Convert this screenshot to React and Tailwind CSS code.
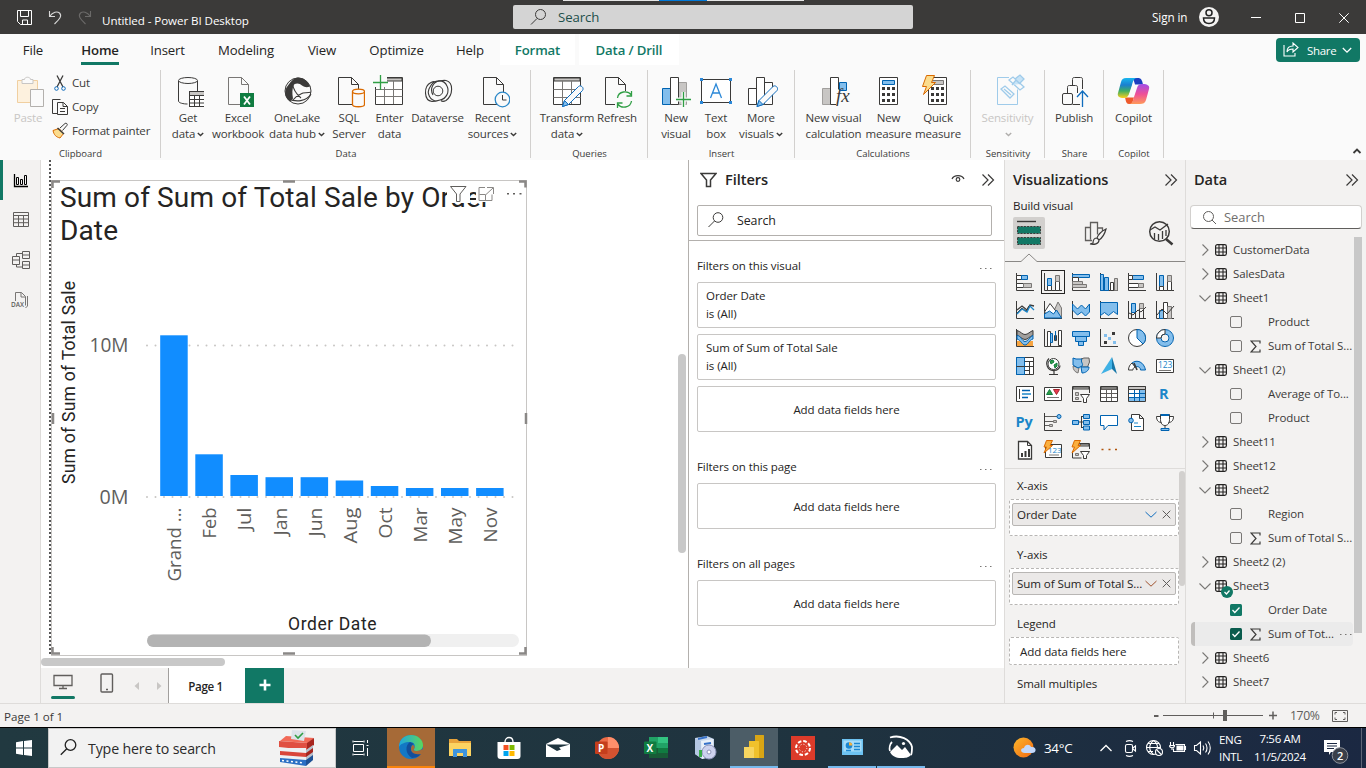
import React from "react";

/* Small drawing helpers */
function Ico({ box, className = "", children }) {
  const [, , w, h] = box.split(" ");
  return (
    <svg viewBox={box} width={w} height={h} fill="none" stroke="#3b3a39" className={"shrink-0 " + className}>
      {children}
    </svg>
  );
}
const B = "#83beec";
const BS = "#0063b1";
const G = "#c8c6c4";

const DoubleChevron = () => (
  <Ico box="0 0 14 14"><path d="M1.500 1.500 7 7l-5.500 5.500M7 1.500 12.500 7 7 12.500" strokeWidth="1.200" /></Ico>
);
const Caret = ({ c = "#3b3a39" }) => (
  <svg width="7" height="5" viewBox="0 0 7 5" fill="none" className="ml-[2px] inline-block"><path d="M.8 1 3.500 3.600 6.200 1" stroke={c} strokeWidth="1.400" /></svg>
);
const Page = ({ x, y, c = "#3b3a39" }) => (
  <path d={`M${x} ${y}h13l7 7v20h-20zM${x + 13} ${y}v7h7`} stroke={c} fill="#fafafa" />
);
const Pencil = ({ x, y }) => (
  <g stroke="#0f6cbd"><path d={`M${x} ${y}l2-6 14-14c2-2 6 1 4 4l-14 14z`} fill="#fafafa" /><path d={`M${x} ${y}l2-6 4 4z`} fill={B} /></g>
);

/* Ribbon */
function Cmd({ w, icon, a, b, caret, dim }) {
  return (
    <div className={"flex shrink-0 flex-col items-center " + w}>
      <div className="flex h-[38px] items-center justify-center">{icon}</div>
      <div className={"flex flex-col items-center whitespace-nowrap text-[11.500px] leading-4 tracking-[-0.16px] " + (dim ? "text-[#c8c6c4]" : "text-[#3b3a39]")}>
        <span>{a}</span>
        <span className="flex items-center">{b}{caret && <Caret c={dim ? "#b0aeac" : "#3b3a39"} />}</span>
      </div>
    </div>
  );
}
function Group({ w, name, children, pad = "" }) {
  return (
    <div className={"flex h-[90px] shrink-0 flex-col " + w}>
      <div className="flex grow">
        <div className={"flex h-[76px] grow pt-[2px] " + pad}>{children}</div>
        <div className="h-[88px] w-px bg-[#d2d0ce]" />
      </div>
      <div className="-mt-[13px] h-[13px] text-center text-[9.500px] leading-[13px] text-[#3b3a39]">{name}</div>
    </div>
  );
}

const DbIcon = (
  <Ico box="172 73 32 36">
    <path d="M178.500 81v20c0 2 5 3 9 3M197.500 81v10" /><ellipse cx="188" cy="80.500" rx="9.500" ry="3" />
    <rect x="189.500" y="91.500" width="15" height="15" fill="#fff" /><path d="M190 92h14v3h-14z" fill={G} stroke="none" /><path d="M189.500 95.500h15M189.500 99.500h15M189.500 103h15M194.500 95v11M199.500 95v11" />
  </Ico>
);
const XlIcon = (
  <Ico box="222 73 32 36"><Page x={228.5} y={77.5} c="#797775" /><path d="M240 93h14v14h-14z" fill="#107c41" stroke="none" />
    <path d="M244 96.500l6 8M250 96.500l-6 8" stroke="#fff" strokeWidth="1.800" /></Ico>
);
const LakeIcon = (
  <Ico box="281 73 32 36"><circle cx="298" cy="91" r="13" /><path d="M298 77.500c6 0 10 4 12 9-3 1-5 1-8-1-2-2-5-3-8-1-2 4-2 9-1 14l-3 3c-6-4-6-12-2-16 3-4 6-8 10-8z" fill="#3b3a39" stroke="none" />
    <path d="M292 82c1 7 4 12 9 16M293 100c4-5 8-6 10-7 5-1 8 0 7-1M288 99c8 3 18 3 23-5" strokeWidth="1.200" /></Ico>
);
const SqlIcon = (
  <Ico box="333 73 32 36"><Page x={338.5} y={77.5} /><path d="M352.500 91.500v13c0 3 12 3 12 0v-13" fill="#fafafa" stroke="#da6a00" strokeWidth="1.300" /><ellipse cx="358.500" cy="91.500" rx="6" ry="2.300" fill="#fafafa" stroke="#da6a00" strokeWidth="1.300" /></Ico>
);
const EnterIcon = (
  <Ico box="373 73 34 36"><path d="M375.500 77.500h27v27h-27z" fill="#fff" /><path d="M384 78h18v3h-18z" fill={G} /><path d="M375.500 89.500h27M375.500 96.500h27M384.500 81v23M393.500 81v23" stroke="#797775" /><path d="M373 75h14v12h-14z" fill="#fafafa" stroke="none" /><path d="M380.500 75v15M373 82.500h15" stroke="#2f9e44" strokeWidth="1.300" /></Ico>
);
const DvIcon = (
  <Ico box="421 73 34 36"><circle cx="438" cy="91" r="4.800" /><path d="M437 101c-7 0-11-8-7-14 4-8 14-8 17-1 3 6-1 13-7 14-3 1-5 1.500-8 1.500-8-1-9-15-1-19 2-1 4-1 5 0" strokeWidth="1.100" /><path d="M433 95c-4-7 1-13 6-14 3-.5 5-1 7-.5 8 2 7 15 0 20-2 1-4 1-5 0" strokeWidth="1.100" /></Ico>
);
const RecentIcon = (
  <Ico box="476 73 34 36"><Page x={483.5} y={77.5} /><circle cx="502.500" cy="99.500" r="7.300" fill="#fafafa" stroke="#2b88c8" strokeWidth="1.300" /><path d="M502.500 95v5h4" /></Ico>
);
const TransIcon = (
  <Ico box="550 73 34 36"><path d="M553.500 77.500h27v27h-27z" fill="#fff" /><path d="M554 78h26v3h-26z" fill={G} /><path d="M553.500 89.500h27M553.500 97.500h27M562.500 81v23M571.500 81v23" stroke="#797775" /><Pencil x={562.5} y={106.500} /></Ico>
);
const RefreshIcon = (
  <Ico box="601 73 34 36"><Page x={606.5} y={77.5} /><path d="M616 91h18v17h-18z" fill="#fafafa" stroke="none" /><path d="M618.500 98c1-7 10-8 14-3M632.500 91v5h-5M632.500 101c-1 7-10 8-14 3M618.500 108v-5h5" stroke="#2f9e44" strokeWidth="1.300" /></Ico>
);
const NewVisIcon = (
  <Ico box="660 73 34 36"><path d="M663.500 88.500h8v16h-8z" fill={B} stroke={BS} /><path d="M679.500 82.500h8v22h-8z" fill={G} stroke="#a19f9d" /><path d="M671.500 77.500h8v27h-8z" fill="#fff" /><path d="M684.500 92v15M677 99.500h15" stroke="#fafafa" strokeWidth="4" /><path d="M684.500 92v15M677 99.500h15" stroke="#2f9e44" strokeWidth="1.300" /></Ico>
);
const TextBoxIcon = (
  <Ico box="699 73 34 36"><path d="M701.500 79.500h29v23h-29z" fill="#fff" /><path d="M710.500 98l5.500-14 5.500 14M712.500 93h7" stroke="#2b88d8" strokeWidth="1.300" /><path d="M700 78h3v3h-3zM729 78h3v3h-3zM700 101h3v3h-3zM729 101h3v3h-3z" fill="#2b88d8" stroke="none" /></Ico>
);
const MoreVisIcon = (
  <Ico box="744 73 34 36"><path d="M748.500 88.500h8v16h-8zM764.500 82.500h8v22h-8z" fill="#fff" /><path d="M756.500 77.500h8v27h-8z" fill="#fff" /><Pencil x={757} y={106.5} /></Ico>
);
const CalcVisIcon = (
  <Ico box="816 73 34 36"><path d="M821.500 88.500h8v16h-8z" fill={G} stroke="#a19f9d" /><path d="M838.500 82.500h7v8h-7z" fill={B} stroke={BS} /><path d="M835 104.500h-5.500v-27h8v12" fill="#fff" /><text x="835" y="102" fontSize="19" fontStyle="italic" className="font-['Liberation_Serif',serif]" fill="#3b3a39" stroke="none">fx</text></Ico>
);
const Calculator = ({ x }) => (
  <g><path d={`M${x} 77.500h18v27h-18z`} fill="#fff" />
    <path d={`M${x + 2.500} 87h3v3h-3zM${x + 7.500} 87h3v3h-3zM${x + 12.500} 87h3v3h-3zM${x + 2.500} 93h3v3h-3zM${x + 7.500} 93h3v3h-3zM${x + 12.500} 93h3v3h-3zM${x + 2.500} 99h3v3h-3zM${x + 7.500} 99h3v3h-3zM${x + 12.500} 99h3v3h-3z`} fill="#3b3a39" stroke="none" /></g>
);
const CalcIcon = (
  <Ico box="872 73 34 36"><Calculator x={879.5} /><path d="M882.500 80.500h12v4h-12z" fill={B} stroke={BS} /></Ico>
);
const QuickIcon = (
  <Ico box="921 73 34 36"><Calculator x={928.5} /><path d="M931.500 80.500h12v4h-12z" fill={G} stroke="#797775" /><path d="M926.500 75.500h8l-3 7h4l-12 12 3-8h-4z" fill="#fbdc8e" stroke="#da6a00" /></Ico>
);
const SensIcon = (
  <Ico box="991 73 34 36"><path d="M1009 77.500h-11.500v27h20v-15" stroke="#9fcbea" /><g stroke="#9fcbea" fill="#fafafa" strokeWidth="1.300"><path d="M1001 89l4-3 9 8-4 4zM1004 89l7 6" /><path d="M1009 80l4-3 11 10-4 3z" /><path d="M1015 79l5-4 4 4-4 4M1012 85l4-5 4 4" fill="#c7e3f6" /></g></Ico>
);
const PubIcon = (
  <Ico box="1058 73 34 36"><path d="M1073.500 85v-5.500c0-1.500.5-2 2-2h6c1.500 0 2 .5 2 2v9.500M1068.500 93v-5.500c0-1.500.5-2 2-2h6c1.500 0 2 .5 2 2v5.500" /><rect x="1063.500" y="93.500" width="10" height="11" rx="1.500" /><path d="M1073.500 104.500h7.500" /><path d="M1083.500 107v-15M1078 97l5.500-6 5.500 6" stroke="#0f6cbd" strokeWidth="1.300" /></Ico>
);
const CopilotIcon = (
  <Ico box="1116 73 36 36">
    <defs>
      <linearGradient id="cpa" x1="0" y1="0" x2="0" y2="1"><stop offset="0" stopColor="#18b6ee" /><stop offset=".35" stopColor="#1a7fd0" /><stop offset=".65" stopColor="#3fae62" /><stop offset="1" stopColor="#fdd01c" /></linearGradient>
      <linearGradient id="cpb" x1="0" y1="0" x2="0" y2="1"><stop offset="0" stopColor="#a14ee8" /><stop offset=".5" stopColor="#ee4f97" /><stop offset="1" stopColor="#ff9a5a" /></linearGradient>
    </defs>
    <g stroke="none"><path d="M1133 78h5c3 0 4 2 5 6.500h-8z" fill="#1c3fc0" /><path d="M1125 97.500h9l-2 6.500h-3c-3 0-3-3-4-6.500z" fill="#ee5a2c" />
      <path d="M1126 78h11c-3 0-4 3-5 7l-3 9c-1 3-2 4-5 4-5 0-7-2-6-5l3-11c1-3 2-4 5-4z" fill="url(#cpa)" />
      <path d="M1140 104h-11c3 0 4-3 5-7l3-9c1-3 2-4 5-4 6 0 8 2 7 5l-3 11c-1 3-3 4-6 4z" fill="url(#cpb)" />
      <path d="M1134 85h4c-2 1-3 4-4 7-1 4-2 5-4 5h-3c2-1 3-4 4-7 1-3 1-5 3-5z" fill="#fafafa" /></g>
  </Ico>
);

function ClipRow({ icon, text }) {
  return <div className="flex h-6 items-center"><div className="flex w-[20px] justify-start">{icon}</div><span className="text-[11.600px] leading-4 tracking-[-0.2px] text-[#3b3a39]">{text}</span></div>;
}

function Ribbon() {
  return (
    <div className="flex h-[90px] bg-[#fafafa]">
      <Group w="w-[161px]" name="Clipboard" pad="pl-[8px]">
        <Cmd w="w-10" dim a="Paste" icon={
          <Ico box="13 73 34 36" className="translate-x-[2px]"><path d="M17.500 80.500h20v22h-20z" fill="#fdf1de" stroke="#f0cfa0" /><path d="M22 83.500v-4h2.500c0-3 6-3 6 0h2.500v4z" fill="#fafafa" stroke="#c8c6c4" /><path d="M30.500 89.500h13v17h-13z" fill="#fafafa" stroke="#b3b0ad" /></Ico>} />
        <div className="-mt-px ml-[4px] flex flex-col">
          <ClipRow text="Cut" icon={<Ico box="52 73 17 20"><path d="M57 75.500l6 11.500M63 75.500l-6 11.500" strokeWidth="1.300" /><circle cx="56.500" cy="88.500" r="1.800" stroke="#0f6cbd" /><circle cx="63.500" cy="88.500" r="1.800" stroke="#0f6cbd" /></Ico>} />
          <ClipRow text="Copy" icon={<Ico box="52 97 17 18"><path d="M57 112.500h-4.500v-14h8" /><path d="M57.500 101.500h6l4 4v8h-10zM63 101.500v4h4.500M60 107.500h5M60 110.500h5" /></Ico>} />
          <ClipRow text="Format painter" icon={<Ico box="52 121 17 18"><path d="M60 127l5-4.500c1-1 3 .5 2 1.800l-4.500 5.200" /><path d="M53 129.500l6-2 4.500 5-3.500 4.500c-4-1-6-3-7-7.500z" fill="#fbdc8e" stroke="#da6a00" /><path d="M57.500 127l6.500 6" stroke="#3b3a39" strokeWidth="1.500" /></Ico>} />
        </div>
      </Group>
      <Group w="w-[370px]" name="Data" pad="pl-[4px]">
        <Cmd w="w-[46px]" icon={DbIcon} a="Get" b="data" caret />
        <Cmd w="w-[54px]" icon={XlIcon} a="Excel" b="workbook" />
        <Cmd w="w-[64px]" icon={LakeIcon} a="OneLake" b="data hub" caret />
        <Cmd w="w-[40px]" icon={SqlIcon} a="SQL" b="Server" />
        <Cmd w="w-[41px]" icon={EnterIcon} a="Enter" b="data" />
        <Cmd w="w-[55px]" icon={DvIcon} a="Dataverse" />
        <Cmd w="w-[55px]" icon={RecentIcon} a="Recent" b="sources" caret />
      </Group>
      <Group w="w-[117px]" name="Queries" pad="pl-[9px]">
        <Cmd w="w-[54px]" icon={TransIcon} a="Transform" b="data" caret />
        <Cmd w="w-[46px]" icon={RefreshIcon} a="Refresh" />
      </Group>
      <Group w="w-[147px]" name="Insert" pad="pl-[7px]">
        <Cmd w="w-[42px]" icon={NewVisIcon} a="New" b="visual" />
        <Cmd w="w-[38px]" icon={TextBoxIcon} a="Text" b="box" />
        <Cmd w="w-[52px]" icon={MoreVisIcon} a="More" b="visuals" caret />
      </Group>
      <Group w="w-[176px]" name="Calculations" pad="pl-[6px]">
        <Cmd w="w-[65px]" icon={CalcVisIcon} a="New visual" b="calculation" />
        <Cmd w="w-[45px]" icon={CalcIcon} a="New" b="measure" />
        <Cmd w="w-[54px]" icon={QuickIcon} a="Quick" b="measure" />
      </Group>
      <Group w="w-[74px]" name="Sensitivity"><Cmd w="w-[73px]" icon={SensIcon} a="Sensitivity" b={<span className="h-4" />} caret dim /></Group>
      <Group w="w-[59px]" name="Share"><Cmd w="w-[58px]" icon={PubIcon} a="Publish" /></Group>
      <Group w="w-[60px]" name="Copilot"><Cmd w="w-[59px]" icon={CopilotIcon} a="Copilot" /></Group>
      <div className="flex grow items-end justify-end pb-[5px] pr-[4px]"><Ico box="0 0 10 8"><path d="M1.500 6 5 2.500 8.500 6" strokeWidth="1.800" /></Ico></div>
    </div>
  );
}

function TitleBar() {
  return (
    <div className="flex h-[34px] items-center bg-[#3b3a39] text-white">
      <div className="flex w-[513px] items-center">
        <Ico box="0 0 16 16" className="ml-[17px] mt-[2px]"><g stroke="#fff"><path d="M.5.5h14v14h-11l-3-3z" /><path d="M3.500.5v6h8v-6M5.500 14v-4h5v4" /></g></Ico>
        <Ico box="0 0 16 16" className="ml-[14px] mt-[2px]"><path d="M2.500 1v5.500h5.500M2.500 6.500C6 2 10 1 12.500 3c3 3 0 6-5 11" stroke="#d8d8d8" strokeWidth="1.100" /></Ico>
        <Ico box="0 0 16 16" className="ml-[14px] mt-[2px]"><path d="M13.500 1v5.500H8M13.500 6.500C10 2 6 1 3.500 3c-3 3 0 6 5 11" stroke="#6b6a69" strokeWidth="1.100" /></Ico>
        <span className="ml-[9px] mt-[7px] whitespace-nowrap text-[11.600px] leading-4 tracking-[-0.07px]">Untitled - Power BI Desktop</span>
      </div>
      <div className="flex h-[34px] w-[400px] flex-col">
        <div className="flex h-[5px] items-start pl-[50px]"><div className="h-px w-24 bg-[#e6e6e6]" /><div className="h-px w-12 bg-[#0078d7]" /><div className="h-px w-[97px] bg-[#e6e6e6]" /></div>
        <div className="flex h-6 items-center rounded-xs bg-[#d4d4d4]">
          <Ico box="0 0 18 18" className="ml-[17px]"><circle cx="10.500" cy="6.500" r="5" /><path d="M7 10.500l-6 6" /></Ico>
          <span className="ml-[10px] mt-px text-[13.200px] tracking-[-0.1px] text-[#1d4f4a]">Search</span>
        </div>
      </div>
      <span className="ml-[239px] mt-px w-[37px] text-[11.700px] tracking-[-0.1px]">Sign in</span>
      <svg width="20" height="20" viewBox="0 0 20 20" fill="none" className="ml-[10px]"><circle cx="10" cy="10" r="10" fill="#f3f2f1" /><circle cx="10" cy="5.800" r="3" stroke="#222" strokeWidth="1.500" /><path d="M4.500 11h11c0 4-2.500 5.500-5.500 5.500S4.500 15 4.500 11z" stroke="#222" strokeWidth="1.500" /></svg>
      <Ico box="0 0 10 10" className="ml-[32px] mt-[2px]"><path d="M0 4.500h10" stroke="#fff" /></Ico>
      <Ico box="0 0 10 10" className="ml-[34px] mt-[2px]"><path d="M.5.5h9v9h-9z" stroke="#fff" /></Ico>
      <Ico box="0 0 10 10" className="ml-[34px] mt-[2px]"><path d="M.3.3l9.400 9.400M9.700.3.300 9.700" stroke="#fff" /></Ico>
    </div>
  );
}

function Tabs() {
  const t = "shrink-0 whitespace-nowrap text-center text-[13.200px] leading-[32px] tracking-[-0.15px] text-[#252423] ";
  return (
    <div className="flex h-9 items-start bg-[#fafafa]">
      <div className={t + "ml-[8px] w-[50px]"}>File</div>
      <div className={t + "ml-[23px] w-[38px]"}><div className="flex justify-center font-semibold">Home</div><div className="-mt-[4px] h-[3px] bg-[#117865]" /></div>
      <div className={t + "ml-[24px] w-[49px]"}>Insert</div>
      <div className={t + "ml-[16px] w-[76px]"}>Modeling</div>
      <div className={t + "ml-[16px] w-[44px]"}>View</div>
      <div className={t + "ml-[20px] w-[65px]"}>Optimize</div>
      <div className={t + "ml-[21px] w-[40px]"}>Help</div>
      <div className={t + "ml-[10px] h-[31px] w-[75px] bg-white font-semibold !text-[#117865]"}>Format</div>
      <div className={t + "ml-[4px] h-[31px] w-[100px] bg-white font-semibold !text-[#117865]"}>Data / Drill</div>
      <div className="grow" />
      <div className="mr-[6px] mt-[4px] flex h-6 w-[84px] items-center rounded bg-[#117865] text-white">
        <svg width="17" height="15" viewBox="0 0 17 15" fill="none" stroke="#fff" strokeWidth="1.100" className="ml-[7px] mb-[2px]"><path d="M1 3v11h11v-3" /><path d="M4 10c0-4 2-6 6-6V1l5 4.500L10 10V7C7 7 5 8 4 10z" /></svg>
        <span className="ml-[7px] mt-px w-[31px] text-[11.500px] font-medium tracking-[-0.3px]">Share</span>
        <svg width="10" height="7" viewBox="0 0 10 7" fill="none" stroke="#fff" strokeWidth="1.300" className="ml-[4px]"><path d="M.8 1 5 5.200 9.200 1" /></svg>
      </div>
    </div>
  );
}

/* Left rail */
function Rail() {
  return (
    <div className="flex w-[41px] shrink-0 flex-col border-r border-[#dedcda] bg-[#f3f2f1]">
      <div className="flex h-10 items-center border-l-[3px] border-[#117865] pl-[10px]"><Ico box="0 0 15 15"><g stroke="#000"><path d="M1.500 1v12.500H15" strokeWidth="1.300" /><path d="M3.500 4.500h2v7h-2zM7.500 6.500h2v5h-2zM11.500 2.500h2v9h-2z" /></g></Ico></div>
      <div className="flex h-10 items-center pb-[2px] pl-[13px]"><Ico box="0 0 16 16"><path d="M.5 1.500h15v14H.5zM.5 4.500h15M.5 8h15M.5 11.700h15M5.500 4v11M10.500 4v11" stroke="#605e5c" /></Ico></div>
      <div className="flex h-10 items-center pl-[12px]"><Ico box="0 0 18 18"><path d="M.5 5.500h7v8h-7zM.5 9h7M10.500.5h7v7h-7zM10.500 4h7M10.500 10.500h7v7h-7zM10.500 14h7M4.500 5V2.500h6M4.500 14v2h6" stroke="#605e5c" /></Ico></div>
      <div className="flex h-10 items-center pl-[11px]"><Ico box="0 0 20 18"><path d="M4.500 10V1.500h6l4 4v9M10 1.500v4.500h4.500M16.500 5v10l-2 2" stroke="#797775" /><text x="0" y="16" fontSize="6.500" fontWeight="600" textLength="13" lengthAdjust="spacingAndGlyphs" fill="#605e5c" stroke="none">DAX</text></Ico></div>
    </div>
  );
}

/* Chart */
const bars = [["Grand ...", 160.7, 74], ["Feb", 41.700, 31], ["Jul", 21, 23], ["Jan", 18.800, 28], ["Jun", 18.800, 29], ["Aug", 15.500, 36], ["Oct", 10, 31], ["Mar", 8, 35], ["May", 8, 37], ["Nov", 8, 35]];
function Plot() {
  return (
    <svg viewBox="52 250 474 404" width="474" height="404" className="font-['Open_Sans','Noto_Sans',sans-serif]">
      <g stroke="#c8c6c4" strokeWidth="2" strokeLinecap="round" strokeDasharray="0 8.500"><path d="M147 345.500h366M147 497h366" /></g>
      {bars.map(([n, h, len], i) => (
        <g key={n}>
          <rect x={160.2 + i * 35.1} y={496 - h} width="27.500" height={h} fill="#118dff" />
          <text transform={`translate(${181.200 + i * 35.1} 507.500) rotate(-90)`} textAnchor="end" textLength={len} lengthAdjust="spacingAndGlyphs" fontSize="19" fill="#605e5c">{n}</text>
        </g>
      ))}
      <text x="89.500" y="352" fontSize="19.500" textLength="39" lengthAdjust="spacingAndGlyphs" fill="#605e5c">10M</text>
      <text x="99.500" y="504" fontSize="19.500" textLength="29" lengthAdjust="spacingAndGlyphs" fill="#605e5c">0M</text>
      <g className="font-['Roboto',sans-serif]" fill="#252423" fontSize="17.500">
        <text transform="translate(75 484) rotate(-90)" textLength="203">Sum of Sum of Total Sale</text>
        <text x="288" y="630" textLength="88.500">Order Date</text>
      </g>
      <rect x="147" y="634" width="372" height="13" rx="6.500" fill="#f0f0f0" />
      <rect x="147" y="634.500" width="284" height="12.500" rx="6.250" fill="#b3b3b3" />
    </svg>
  );
}
function Canvas() {
  return (
    <div className="flex h-[508px] w-[647px] shrink-0 bg-white">
      <div className="flex w-[637px] flex-col">
        <div className="flex h-[496px]">
          <div className="ml-[8px] h-[496px] w-[2px] bg-[repeating-linear-gradient(#555_0_2px,#fff_2px_4px)]" />
          <div className="relative mt-[20px] flex h-[476px] w-[476px] flex-col border border-[#c8c6c4]">
            <div className="h-[69px] whitespace-pre pl-[8px] font-['Roboto',sans-serif] text-[28px] leading-[33px] tracking-[0.13px] text-[#252423]">{"Sum of Sum of Total Sale by Order\nDate"}</div>
            <Plot />
            <svg viewBox="51 180 477 476" width="477" height="476" fill="none" className="absolute -left-px -top-px">
              <path d="M447 183h23v20h-23zM476 183h21v19h-21z" fill="#fff" />
              <path d="M450.500 186.500h15.500l-6 7.500v7.500h-3.500v-7.500z" stroke="#605e5c" />
              <path d="M485 187.500h-6v13h13v-6M479.500 194.500h6v6M487 187.500h6.500v6.500M493 188l-7 6.500" stroke="#8a8886" />
              <path d="M507 193h2v1.500h-2zM513 193h2v1.500h-2zM519.500 193h2v1.500h-2z" fill="#605e5c" />
              <path d="M52.500 188v-6.500H60M519 181.500h6.500v6M52.500 647v6.500H60M519 653.500h6.500V647" stroke="#8a8886" strokeWidth="2.500" />
              <path d="M283 181.500h12M283 653.500h12M53 413v11M526 413v11" stroke="#8a8886" strokeWidth="2.500" />
            </svg>
          </div>
        </div>
        <div className="mt-[2px] h-2 w-[184px] rounded-full bg-[#c8c8c8]" />
      </div>
      <div className="mt-[194px] h-[199px] w-2 rounded-full bg-[#c8c8c8]" />
    </div>
  );
}
function PageTabs() {
  return (
    <div className="flex h-[35px] bg-[#f3f2f1]">
      <div className="ml-[10px] flex w-6 flex-col items-center pt-[6px]"><Ico box="0 0 20 16" className="-ml-px"><path d="M1 1.500h18v10H1zM10 12v2.500M6 14.500h8" strokeWidth="1.300" stroke="#605e5c" /></Ico><div className="mt-[6px] h-[3px] w-6 rounded-sm bg-[#117865]" /></div>
      <Ico box="0 0 14 20" className="ml-[25px] mt-[5px]"><rect x="1" y="1" width="11.500" height="18" rx="1" strokeWidth="1.400" stroke="#605e5c" /><path d="M6 16.500h2" stroke="#605e5c" strokeWidth="1.400" /></Ico>
      <svg width="30" height="10" viewBox="0 0 30 10" className="ml-[20px] mt-[13px]"><path d="M5 1v8L.5 5zM23 1v8L27.500 5z" fill="#c8c6c4" /></svg>
      <div className="ml-[4px] flex w-[77px] flex-col border-l border-[#a19f9d] bg-white"><div className="grow pr-[3px] pt-[2px] text-center text-[11.600px] font-semibold leading-[34px] tracking-[-0.35px] text-[#252423]">Page 1</div><div className="h-1 shrink-0 bg-[#117865]" /></div>
      <div className="flex w-[39px] items-center justify-center bg-[#117865]"><svg width="12" height="12" viewBox="0 0 12 12" className="mb-[2px]"><path d="M6 .5v11M.5 6h11" stroke="#fff" strokeWidth="2.600" /></svg></div>
    </div>
  );
}

/* Filters pane */
const Dots = () => <Ico box="0 0 12 3"><path d="M0 1.500h1.500M5 1.500h1.500M10 1.500h1.500" stroke="#797775" strokeWidth="1" /></Ico>;
function FCard({ a, b }) {
  return (
    <div className="mb-[6px] flex h-[46px] w-[299px] flex-col justify-center rounded-xs border border-[#c8c6c4] text-[11.500px] leading-[18px]">
      {b ? <div className="-mt-px pl-2"><div>{a}</div><div>{b}</div></div> : <div className="pt-px text-center">{a}</div>}
    </div>
  );
}
function FHead({ text, mt }) {
  return <div className={"mb-[7px] flex h-[18px] w-[295px] items-center justify-between text-[11.500px] " + mt}><span>{text}</span><span className="mt-[4px] flex"><Dots /></span></div>;
}
function Filters() {
  return (
    <div className="flex h-[508px] w-[316px] shrink-0 flex-col border-l border-[#b3b0ad] bg-white tracking-[-0.07px] text-[#252423]">
      <div className="flex h-[45px] items-center pb-[6px] pl-[11px]">
        <Ico box="0 0 17 16"><path d="M1 1.500h15l-5.500 6.500v6.500h-4V8z" strokeWidth="1.500" /></Ico>
        <span className="ml-[8px] w-[226px] text-[14.600px] font-semibold">Filters</span>
        <Ico box="0 0 14 10" className="-mt-[2px]"><path d="M1 5c2-4.500 10-4.500 12 0" strokeWidth="1.200" /><circle cx="7" cy="5.500" r="1.800" strokeWidth="1.200" /></Ico>
        <span className="ml-[16px] flex"><DoubleChevron /></span>
      </div>
      <div className="ml-[8px] flex h-[31px] w-[295px] items-center rounded-xs border border-[#b3b0ad]">
        <Ico box="0 0 16 16" className="ml-[10px] -mt-[2px]"><circle cx="10" cy="5.500" r="4.800" /><path d="M6.500 9 .5 15" /></Ico>
        <span className="ml-[13px] mt-px text-[12.400px]">Search</span>
      </div>
      <div className="mt-[4px] h-px bg-[#b3b0ad]" />
      <div className="pl-[8px]">
        <FHead mt="mt-[16px]" text="Filters on this visual" />
        <FCard a="Order Date" b="is (All)" /><FCard a="Sum of Sum of Total Sale" b="is (All)" /><FCard a="Add data fields here" />
        <FHead mt="mt-[26px]" text="Filters on this page" /><FCard a="Add data fields here" />
        <FHead mt="mt-[26px]" text="Filters on all pages" /><FCard a="Add data fields here" />
      </div>
    </div>
  );
}

/* Visual gallery glyphs, each on an 18 x 18 grid */
const ax = <path d="M.5 0v17.500H18" />;
const blue = { fill: B, stroke: BS };
const gray = { fill: G, stroke: "#797775" };
const T = (x, y, s, t, w) => <text x={x} y={y} fontSize={s} fontWeight={w} fill="#1b86c9" stroke="none">{t}</text>;
const Bolt = <path d="M2.500-.5h6l-2.500 5h2.500L0 12l2.500-6H0z" fill="#fbb040" stroke="#da6a00" />;
const gallery = [
  <>{ax}<path d="M.5 2.500h6v4h-6zM.5 10.500h7v4h-7z" fill="#fff" /><path {...blue} d="M5.500 2.500h6v4h-6z" /><path {...gray} d="M7.500 10.500h8v4h-8z" /></>,
  <>{ax}<path d="M3.500 12.500h4v5h-4zM11.500 8.500h4v9h-4z" fill="#fff" /><path {...blue} d="M3.500 5.500h4v7h-4z" /><path {...gray} d="M11.500 2.500h4v6h-4z" /></>,
  <>{ax}<path {...blue} d="M.5 1.500h17v3H.5z" /><path d="M.5 4.500h6v4h-6z" fill="#fff" /><path {...gray} d="M.5 8.500h10v3H.5zM.5 11.500h14v3H.5z" /></>,
  <>{ax}<path {...blue} d="M.5 1.500h3v16h-3zM4.500 4.500h4v13h-4z" /><path d="M14.500 5.500h3v12h-3z" {...gray} /><path d="M10.500 9.500h3v8h-3z" fill="#fff" /></>,
  <>{ax}<path {...blue} d="M4.500 2.500h11v4h-11z" /><path d="M.5 2.500h4v4h-4zM.5 10.500h10v4H.5z" fill="#fff" /><path {...gray} d="M10.500 10.500h5v4h-5z" /></>,
  <>{ax}<path {...blue} d="M3.500 2.500h4v11h-4z" /><path d="M3.500 13.500h4v4h-4zM11.500 8.500h4v9h-4z" fill="#fff" /><path {...gray} d="M11.500 2.500h4v6h-4z" /></>,
  <>{ax}<path d="M1 9l5-4 5 4 3-5 4 1" stroke="#3b3a39" strokeWidth="1.300" /><path d="M1 12l5-5 4 3 3-5" /><path d="M1 13l5-5 5 3 3-6 4 4" stroke="#1b86c9" strokeWidth="1.300" /></>,
  <>{ax}<path {...gray} d="M9 12l5-11 3.500 6v10z" /><path d="M.5 11L6 2.500l7 9-6 6z" fill="#fff" /><path {...blue} d="M.5 17V13l5-3 4 3 3-4 5 8z" /></>,
  <>{ax}<path {...blue} d="M.5 3l5 5 4-4 4 4 4-5v8l-4 4-4-4-4 3-5-5z" /></>,
  <>{ax}<path {...blue} d="M.5 1.500h17v12l-4-3-5 4-4-3-4 3z" /></>,
  <>{ax}<path {...blue} d="M3.500 2.500h4v9h-4z" /><path {...gray} d="M11.500 2.500h4v5h-4z" /><path d="M3.500 11.500v6M7.500 11.500v6M11.500 7.500v10M15.500 7.500v10M1 12l4 2 5-5 3 2 5-5" /></>,
  <>{ax}<path {...blue} d="M3.500 9.500h4v8h-4z" /><path d="M7.500 1.500h4v16h-4z" fill="#fff" /><path {...gray} d="M11.500 5.500h4v12h-4z" /><path d="M1 14l5-6 5 5 7-8" /></>,
  <>{ax}<path d="M1 12h16v5H1z" fill="#f7a440" stroke="none" /><path d="M1 1.500c4 1 5 4 8 4s5-3 8-4v5c-4 1-5 4-8 4S4 7 1 6.500z" fill="#a19f9d" /><path {...blue} d="M1 6.500c4 0 5 6 8 6s5-5 8-6v3.500c-4 1-5 6-8 6s-4-5-8-6z" /></>,
  <>{ax}<path d="M3.500 2.500h3v15h-3zM10.500 6.500h2v5h-2zM14.500 1.500h3v15h-3z" fill="#fff" /><path {...blue} d="M11.500 2v9M6.500 4.500h2v9h-2z" /></>,
  <><path {...blue} d="M.5 2.500h17v5H.5zM3.500 7.500h11v5h-11zM6.500 12.500h5v4h-5z" /></>,
  <>{ax}<path d="M12 3h3v3h-3zM4 12h3v3H4z" fill="#3b3a39" stroke="none" /><path d="M4 5h3v3H4zM8 8h3v3H8zM13 12h3v3h-3z" fill={B} stroke="none" /></>,
  <><circle cx="9" cy="9" r="8.500" fill="#fff" /><path {...blue} d="M9 .5a8.500 8.500 0 0 1 6 14.500L9 9z" /></>,
  <><circle cx="9" cy="9" r="6.300" stroke={B} strokeWidth="4" /><circle cx="9" cy="9" r="8.500" stroke={BS} /><circle cx="9" cy="9" r="4" stroke={BS} /><path d="M9 .5A8.500 8.500 0 0 0 .5 9H5a4 4 0 0 1 4-4z" fill="#fff" /></>,
  <><path d="M.5.5h17v17H.5zM8.500 9.500h9" fill="#fff" /><path {...blue} d="M.5.5h8v17h-8z" /><path d="M8.500 4.500h9M13.500 4.500v13M8.500 9.500h9M8.500 13.500h5M.5 9.500h8" /></>,
  <><circle cx="9.500" cy="7" r="5.500" fill="#fff" /><path d="M6 4l3-1 1 2-3 2zM10 8l3-2v3l-2 2z" fill="#2f9e44" stroke="#107c41" /><path d="M5 1.500c-5 5-1 12.500 5 12 4 0 6-3 6-5M10 14v3M5 17.500h9" strokeWidth="1.200" /></>,
  <><path d="M9 2l3-1h5l.5 4-2 5H9z" fill={G} stroke="#605e5c" /><path {...gray} d="M1 9l6 2-1 5c-3-1-5-3-5-7z" /><path {...blue} d="M1 1l3 1h6c-2 3 2 5 0 7l-4 2-5-3zM9 10h8c0 4-4 6-7 6z" /></>,
  <><path d="M12 0L1 17l11-5z" fill="#3fb1e5" stroke="none" /><path d="M12 0l5 17-5-5z" fill="#1677a8" stroke="none" /></>,
  <><path {...blue} d="M4 6c5-4 12-1 13.500 7h-5c0-3-3-4-5-3z" /><path d="M.5 13C.5 10 2 7.500 4 6l3 4c-2 1-2 2-2 3z" fill="#fff" /><path d="M9 13l-3-7" strokeWidth="1.600" /></>,
  <><path d="M.5 2.500h17v13H.5z" fill="#fff" />{T(2, 11, 8.5, "123", 400)}<path d="M3 13.500h12" stroke="#797775" /></>,
  <><path d="M.5 1.500h17v15H.5z" fill="#fff" /><path d="M3.500 4v10" stroke="#3b3a39" /><path d="M6 5.500h8M6 12.500h6" stroke={BS} strokeWidth="1.500" /><path d="M6 9h9" stroke="#1b86c9" strokeWidth="1.500" /></>,
  <><path d="M.5 2.500h17v13H.5z" fill="#fff" /><path d="M2.500 9.500l3-5 3 5z" fill="#2f9e44" stroke="#107c41" /><path d="M9.500 4.500h6l-3 5z" fill="#e8384f" stroke="#a4262c" /><path d="M3 12.500h12" stroke="#797775" /></>,
  <><path d="M17.500 8V1.500H.5v15h9" /><path d="M1 2h16v2H1z" fill={G} /><path {...gray} d="M3.500 7.500h3v3h-3zM3.500 12.500h3v2h-3z" /><path d="M8.500 9.500h9l-3 4v4h-3v-4z" fill="#fff" /></>,
  <><path d="M.5 1.500h17v15H.5z" fill="#fff" /><path d="M1 2h16v2H1z" fill={G} /><path d="M1 4.500h16M1 8.500h16M1 12.500h16M6.500 4v12M11.500 4v12" stroke="#605e5c" /></>,
  <><path d="M.5 1.500h17v15H.5z" fill="#fff" /><path d="M12 5h5v11H1v-3h11z" fill={B} stroke="none" /><path d="M1 8.500h16M1 12.500h16M6.500 4v12M11.500 4v12" stroke={BS} /><path d="M.5 1.500h17v3H.5z" fill={G} /></>,
  <>{T(3, 14, 14.5, "R", 700)}</>,
  <>{T(-0.5, 13.5, 14.5, "Py", 700)}</>,
  <>{ax}<path d="M1 3.500h13M1 8.500h9M1 12.500h4" stroke="#605e5c" /><circle cx="15" cy="3.500" r="2" {...blue} /><path {...gray} d="M9.500 7.500h3v2h-3zM5.500 11.500h3v2h-3z" /></>,
  <><path d="M6 9h6M9.500 3v12M9.500 3.500H12M9.500 14.500H12" /><path {...blue} d="M.5 7.500h6v4h-6zM11.500 1.500h6v4h-6zM11.500 7.500h6v4h-6zM11.500 13h6v4h-6z" /></>,
  <><path d="M.5 2.500h17v10H8l-4 4.500v-4.500H.5z" fill="#fff" stroke={BS} /></>,
  <><path d="M3.500 1.500h8l4 4v12h-12zM11.500 1.500v4h4" fill="#fff" /><path d="M6 10h4M6 13.500h7" stroke="#1b86c9" /><circle cx="3" cy="7.500" r="2.300" {...blue} /></>,
  <><path d="M4.500 1.500h9v5c0 4-2 6-4.500 6s-4.500-2-4.500-6zM4.500 3.500h-4c0 4 2 6 5 6M13.500 3.500h4c0 4-2 6-5 6M9 12.500V16" fill="#fff" /><path {...blue} d="M5 15.500h8v2H5zM5 1.500h8v1H5z" /></>,
  <><path d="M2.500.5h9l4 4v13.500h-13z" fill="#fff" strokeWidth="1.300" /><path d="M11.500.5v4h4" /><path d="M5 12h2v4H5zM8.500 10h2v6h-2zM12 8h2v8h-2z" fill="#3b3a39" stroke="none" /></>,
  <><path d="M1.500 3.500h16v13h-16z" fill="#fff" />{T(4, 12, 8, "123", 400)}<path d="M5 14h10" stroke="#797775" />{Bolt}</>,
  <><path d="M17.500 8V2.500H6M.5 10v7h9" /><path d="M8 3h9v2H8z" fill={G} /><path {...gray} d="M3.500 12.500h3v2h-3z" /><path d="M8.500 10.500h9l-3 4v3h-3v-3z" fill="#fff" />{Bolt}</>,
  <><path d="M1.500 8.500h2M8.500 8.500h2M15 8.500h2" stroke="#b0530a" strokeWidth="1.500" /></>,
];
function Well({ children, h }) {
  return <div className={"ml-[4px] w-[170px] rounded-xs border border-dashed border-[#b8b6b4] bg-white " + h}>{children}</div>;
}
function Chip({ text, c }) {
  return (
    <div className="ml-[2px] mt-[3px] flex h-[23px] w-[164px] items-center rounded-xs border border-[#b8b6b4] bg-[#ebe9e8]">
      <span className="w-[129px] whitespace-nowrap pl-[4px] text-[11.600px]">{text}</span>
      <Ico box="0 0 14 9" className="ml-[2px]"><path d="M1.500 2 7 7.200 12.500 2" stroke={c} /></Ico>
      <Ico box="0 0 9 9" className="ml-[4px]"><path d="M.7.7l7.600 7.600M8.300.7.700 8.300" stroke="#605e5c" /></Ico>
    </div>
  );
}
function Visualizations() {
  const lab = "pl-[12px] text-[11.500px] leading-[18px] ";
  return (
    <div className="flex h-[543px] w-[181px] shrink-0 border-l border-[#dedcda] bg-[#f3f2f1] tracking-[-0.1px] text-[#252423]">
      <div className="flex w-[180px] flex-col overflow-hidden">
        <div className="flex h-[39px] items-center pl-[8px]"><span className="w-[151px] text-[14.600px] font-semibold">Visualizations</span><DoubleChevron /></div>
        <div className="h-[18px] pl-[8px] text-[11.600px] font-medium leading-[13px]">Build visual</div>
        <div className="flex h-8">
          <div className="ml-[8px] h-8 w-8 rounded-xs bg-[#d2d0ce]"><Ico box="1013 217 32 32"><path d="M1017 221.500h19" strokeWidth="1.400" /><path d="M1017.500 226.500h23v7h-23zM1017.500 237.500h23v7h-23z" fill="#117865" strokeDasharray="2 1.200" /></Ico></div>
          <Ico box="1080 217 32 32" className="ml-[35px]"><path d="M1092 240.500h-6.500v-13h5v12M1090.500 231v-8.500h7v12M1097.500 228h5v3" stroke="#605e5c" strokeWidth="1.300" /><path d="M1106 229c-4 2-8 6-9 9l2 2c3-2 6-7 7-11zM1097 238c-3 0-4 2-4 5-1 0-2 1-3 1 4 1 9 0 9-4" fill="#f3f2f1" strokeWidth="1.200" /></Ico>
          <Ico box="1145 217 32 32" className="ml-[33px]"><circle cx="1159.500" cy="231.500" r="9.800" strokeWidth="1.500" /><path d="M1166 239l6.500 5.500" strokeWidth="2.600" /><path d="M1150 230l5-3 5 3 8-6M1154.500 239v-6M1158.500 240v-6M1162.500 239v-8M1166 236v-6" strokeWidth="1.300" /></Ico>
        </div>
        <svg width="180" height="14" viewBox="1005 249 180 14" fill="none" className="shrink-0"><path d="M1005 261.500h16l8-7.500 8 7.500h148" stroke="#8a8886" /></svg>
        <div className="ml-[6px] mt-[5px] grid shrink-0 grid-cols-[repeat(6,28px)] auto-rows-[28px]">
          {gallery.map((g, i) => (
            <div key={i} className={"flex items-center justify-center " + (i === 1 ? "m-[2px] border border-[#252423]" : "")}>
              <svg width="18" height="18" viewBox="0 0 18 18" fill="none" stroke="#3b3a39" className="overflow-visible">{g}</svg>
            </div>
          ))}
        </div>
        <div className="mt-[4px] h-px shrink-0 bg-[#dedcda]" />
        <div className={lab + "mb-[4px] mt-[8px]"}>X-axis</div>
        <Well h="h-[37px]"><Chip text="Order Date" c="#0f6cbd" /></Well>
        <div className={lab + "mb-[4px] mt-[10px]"}>Y-axis</div>
        <Well h="h-[37px]"><Chip text="Sum of Sum of Total S..." c="#a0522d" /></Well>
        <div className={lab + "mb-[4px] mt-[10px]"}>Legend</div>
        <Well h="h-[28px]"><div className="pl-[10px] text-[11.600px] leading-[27px]">Add data fields here</div></Well>
        <div className={lab + "mt-[10px]"}>Small multiples</div>
      </div>
      <div className="relative"><div className="absolute -left-[6px] top-[311px] h-[115px] w-[6px] rounded-full bg-[#d2d0ce]" /></div>
    </div>
  );
}

/* Data pane */
const tree = [
  ["t", "CustomerData"], ["t", "SalesData"], ["o", "Sheet1"], ["f", "Product"], ["s", "Sum of Total S..."], ["o", "Sheet1 (2)"],
  ["f", "Average of To..."], ["f", "Product"], ["t", "Sheet11"], ["t", "Sheet12"], ["o", "Sheet2"], ["f", "Region"], ["s", "Sum of Total S..."],
  ["t", "Sheet2 (2)"], ["o", "Sheet3", 1], ["f", "Order Date", 1], ["s", "Sum of Tot...", 2], ["t", "Sheet6"], ["t", "Sheet7"],
];
function TableRow({ open, text, badge }) {
  return (
    <div className="flex h-6 items-center">
      <Ico box="0 0 14 14" className="ml-[12px]"><path d={open ? "M1.500 4.500 7 10l5.500-5.500" : "M4.500 1.500 10 7l-5.500 5.500"} stroke="#797775" strokeWidth="1.100" /></Ico>
      <div className="relative ml-[3px] flex">
        <Ico box="0 0 12 12"><rect x=".6" y=".6" width="10.800" height="10.800" rx="1.800" strokeWidth="1.200" stroke="#252423" /><path d="M1 4h10M1 8h10M4 1v10M8 1v10" strokeWidth="1.100" stroke="#252423" /></Ico>
        {badge && <svg width="12" height="12" viewBox="0 0 12 12" fill="none" className="absolute left-[6px] top-[6px]"><circle cx="6" cy="6" r="6" fill="#117865" /><path d="M3.500 6l2 2 3-3.500" stroke="#fff" strokeWidth="1.300" /></svg>}
      </div>
      <span className="ml-[6px]">{text}</span>
    </div>
  );
}
function FieldRow({ sum, text, on }) {
  return (
    <div className={"flex h-6 items-center " + (on === 2 ? "ml-[5px] w-[162px] rounded border-l-4 border-[#c0bebc] bg-[#ebebeb] pl-[35px]" : "pl-[44px]")}>
      {on ? (
        <svg width="12" height="12" viewBox="0 0 12 12" fill="none"><rect width="12" height="12" rx="1.500" fill={on === 2 ? "#0a5c4d" : "#117865"} /><path d="M2.500 6l2.300 2.500L9.500 3.500" stroke="#fff" strokeWidth="1.300" /></svg>
      ) : <div className="h-3 w-3 rounded-xs border border-[#797775]" />}
      <div className="flex w-5 pl-[8px]">{sum && <Ico box="0 0 11 13"><path d="M10 3.500v-2.500H1l5 5.500L1 12h9V9.500" strokeWidth="1.200" /></Ico>}</div>
      <span className="whitespace-nowrap pl-[6px]">{text}</span>
      {on === 2 && <span className="ml-[6px] flex"><Dots /></span>}
    </div>
  );
}
function DataPane() {
  return (
    <div className="flex h-[543px] grow flex-col border-l border-[#dedcda] bg-[#f3f2f1] text-[#3b3a39]">
      <div className="flex h-[39px] items-center pl-[8px]"><span className="w-[151px] text-[14.600px] font-semibold tracking-[-0.1px] text-[#252423]">Data</span><DoubleChevron /></div>
      <div className="ml-[4px] mt-[6px] flex h-6 w-[172px] shrink-0 items-center rounded border border-b-[#605e5c] border-[#d2d0ce] bg-white">
        <Ico box="0 0 15 15" className="ml-[11px]"><circle cx="6.500" cy="6.500" r="5" stroke="#605e5c" /><path d="M10 10l4 4" stroke="#605e5c" /></Ico>
        <span className="ml-[7px] mt-px text-[12.900px] text-[#706e6c]">Search</span>
      </div>
      <div className="mt-[8px] flex">
        <div className="mt-px w-[168px] text-[11.500px] tracking-[-0.1px]">
          {tree.map(([k, n, on], i) => k === "t" || k === "o" ? <TableRow key={i} open={k === "o"} text={n} badge={on} /> : <FieldRow key={i} sum={k === "s"} text={n} on={on} />)}
        </div>
        <div className="h-[396px] w-2 bg-[#c8c8c8]" />
      </div>
    </div>
  );
}

function StatusBar() {
  return (
    <div className="flex h-6 items-center border-t border-[#dedcda] bg-[#f3f2f1] text-[#605e5c]">
      <span className="ml-[4px] w-[1149px] pt-[3px] text-[11.600px] tracking-[-0.02px] text-[#3b3a39]">Page 1 of 1</span>
      <svg width="126" height="14" viewBox="1153 709 126 14" fill="none" stroke="#605e5c"><path d="M1154 716h4.500" strokeWidth="2" /><path d="M1163 715.500h100M1213.500 712.500v6" /><path d="M1223 710h4v11h-4z" fill="#605e5c" stroke="none" /><path d="M1269 715.500h8M1273 711.500v8" strokeWidth="1.500" /></svg>
      <span className="ml-[11px] w-[42px] pt-px text-[12.200px] tracking-[-0.35px]">170%</span>
      <Ico box="0 0 16 12"><path d="M.5.5h15v11H.5zM3 4.500v-2h2M11 2.500h2v2M3 7.500v2h2M11 9.500h2v-2" stroke="#605e5c" /></Ico>
    </div>
  );
}

/* Taskbar */
function Tile({ children, cls = "" }) {
  return <div className={"flex h-full w-12 shrink-0 items-center justify-center " + cls}>{children}</div>;
}
function Taskbar() {
  const W = { stroke: "#fff" };
  return (
    <div className="flex h-[41px] items-stretch border-t border-black bg-[linear-gradient(90deg,#213940,#1f333f_60%,#1b2842)] text-white">
      <Tile><svg width="16" height="16" viewBox="0 0 16 16" fill="#fff"><path d="M0 2.200 7 1v6.500H0zM8 .9 16 0v7.500H8zM0 8.500h7V15l-7-1.200zM8 8.500h8V16l-8-1z" /></svg></Tile>
      <div className="flex w-[288px] items-center border border-[#c8c8c8] bg-[#f2f2f2]">
        <svg width="17" height="18" viewBox="0 0 17 18" fill="none" stroke="#222" strokeWidth="1.300" className="ml-[11px] mb-[3px]"><circle cx="10.500" cy="7" r="5.300" /><path d="M6.800 10.800 .8 16.800" /></svg>
        <span className="ml-[11px] mt-px w-[190px] text-[14.200px] tracking-[-0.15px] text-[#2b2b2b]">Type here to search</span>
        <svg width="36" height="38" viewBox="277 729 36 38" fill="none"><path d="M279 741l6-5 28 2-6 5z" fill="#f26a58" /><path d="M291 730l14 1-2 10-13-2z" fill="#dde3ea" /><path d="M294 735l3 3 5-5" stroke="#2f9e44" strokeWidth="1.600" /><path d="M278 741l28 2v7l-28-3z" fill="#e04f42" /><path d="M306 743l7-5v7l-7 5z" fill="#a8261f" /><path d="M279 748h26v16l-26-3z" fill="#eef0f3" /><path d="M279 751l26 2v4l-26-2z" fill="#d9453a" /><path d="M305 750l7-5v15l-7 5z" fill="#b8c0cc" /><path d="M305 753l7-5v4l-7 5z" fill="#a8261f" /><path d="M279 758l26 2v6l-26-4z" fill="#2a6fc4" /><path d="M305 760l7-5v5l-7 6z" fill="#1d5196" /><path d="M281 760.500l22 2.500" stroke="#fff" strokeWidth="1.600" strokeDasharray="2 2.500" /></svg>
      </div>
      <div className="flex w-[50px] items-center justify-center"><svg width="18" height="16" viewBox="0 0 18 16" fill="none" {...W}><path d="M1.500 4.500h10v7h-10zM1 2.500V.5M1.500 1.500h10M12 2.500V.5M1 13.500v2M1.500 14.500h10M12 13.500v2M15.500 0v3M15.500 8v8M14.500 5.500h2" /></svg></div>
      <div className="flex gap-px">
        <Tile cls="ml-px border-b-2 border-[#f7830c] bg-[#a66a37]">
          <svg width="26" height="26" viewBox="0 0 26 26"><defs><linearGradient id="eg" x1="0" y1="0" x2="1" y2="0"><stop offset="0" stopColor="#1fa7e0" /><stop offset="1" stopColor="#5bd75b" /></linearGradient></defs><circle cx="13" cy="13" r="12" fill="#1378c4" /><path d="M1 13C1 5 7 1 13 1c7 0 12 5 12 10 0 4-3 6-7 6-2 0-3-1-2-2 2-4 0-7-4-7-5 0-10 2-11 5z" fill="url(#eg)" /><path d="M12 8c-5 3-5 12 2 16 5 0 9-3 10-6-5 3-12 1-11-4 0-3 2-4 3-4z" fill="#114f9c" /><path d="M16 15c-1 1 0 2 2 2 3 0 5-1 6-2l2 2-2 3c-4 1-11 0-11-5 0-2 1-4 2-4 2 1 2 3 1 4z" fill="#a66a37" /></svg>
        </Tile>
        <Tile><svg width="22" height="20" viewBox="0 0 22 20"><path d="M0 1h8l2 2h12v15H0z" fill="#e8a33a" /><path d="M0 5h22v13H0z" fill="#fcd462" /><path d="M4 19v-7c0-1 0-1 1-1h12c1 0 1 0 1 1v7h-4v-4H8v4z" fill="#3d94dc" /></svg></Tile>
        <Tile><svg width="24" height="24" viewBox="0 0 24 24" fill="none"><path d="M8 6c0-6 8-6 8 0" stroke="#fff" strokeWidth="1.300" /><path d="M.5 6h23v14c0 2-1 3-3 3h-17c-2 0-3-1-3-3z" fill="#fff" /><path d="M6.500 9h5v5h-5z" fill="#f25022" /><path d="M12.500 9h5v5h-5z" fill="#7fba00" /><path d="M6.500 15h5v5h-5z" fill="#00a4ef" /><path d="M12.500 15h5v5h-5z" fill="#ffb900" /></svg></Tile>
        <Tile><svg width="24" height="20" viewBox="0 0 24 20"><path d="M0 6l12-6 12 6v13H0z" fill="#fff" /><path d="M0 6.500l11 6.500 4-1.500-2-2L24 6.500z" fill="#1f353f" /></svg></Tile>
        <Tile><svg width="24" height="24" viewBox="0 0 24 24"><circle cx="13" cy="12" r="11" fill="#ed6c47" /><path d="M13 1a11 11 0 0 1 11 11H13z" fill="#ff8f6b" /><path d="M2 12h22a11 11 0 0 1-22 0z" fill="#d35230" /><rect y="5.500" width="12.500" height="12.500" rx="1" fill="#c43e1c" /><text x="3" y="15.500" fontSize="10" fontWeight="700" fill="#fff">P</text></svg></Tile>
        <Tile><svg width="24" height="24" viewBox="0 0 24 24"><path d="M5 1h9v11H5z" fill="#21a366" /><path d="M14 1h10v6H14z" fill="#33c481" /><path d="M14 7h10v5H14z" fill="#21a366" /><path d="M5 12h19v10H5z" fill="#185c37" /><path d="M14 12h10v5H14z" fill="#107c41" /><rect y="5.500" width="12.500" height="12.500" rx="1" fill="#107c41" /><text x="2.500" y="15.500" fontSize="10" fontWeight="700" fill="#fff">X</text></svg></Tile>
        <Tile><svg width="26" height="26" viewBox="0 0 26 26"><path d="M3 3l12-2 7 3v17l-12 3-7-5z" fill="#c9d9ee" /><path d="M3 3l6 3v17l-6-4z" fill="#b4c7e2" /><path d="M9 6l12-2v17l-11 3z" fill="#e9f0f9" /><path d="M12 9l7-1M6 4l9-2" stroke="#3772c9" strokeWidth="2" /><circle cx="17" cy="17" r="7" fill="#cdd2ee" stroke="#8b93b8" /><circle cx="17" cy="17" r="2" fill="#fff" stroke="#8b93b8" /><path d="M7 15h3v7H7z" fill="#3aae4a" /></svg></Tile>
        <Tile cls="border-b-2 border-[#76b9ed] bg-[#4c5d67]"><svg width="20" height="24" viewBox="0 0 20 24"><path d="M11 0h8c1 0 1 0 1 1v22H11z" fill="#d9a514" /><path d="M5 6h9c1 0 1 0 1 1v16H5z" fill="#f0c12c" /><path d="M0 12h9c1 0 1 0 1 1v10H0z" fill="#f7d560" /></svg></Tile>
        <Tile><svg width="24" height="24" viewBox="0 0 24 24" fill="none"><path d="M0 0h24v24H0z" fill="#dc3b2a" /><circle cx="12" cy="12" r="7" stroke="#fff" strokeWidth="2" strokeDasharray="3.600 1.900" /><circle cx="12" cy="12" r="3.800" stroke="#fff" strokeDasharray="1 1.980" /></svg></Tile>
        <Tile cls="border-b-2 border-[#76b9ed]"><svg width="21" height="16" viewBox="0 0 21 16" fill="none"><path d="M0 0h21v16H0z" fill="#6dc3f2" /><path d="M1.500 1.500h18v11h-18z" fill="#a6dcf9" /><circle cx="7" cy="6.500" r="3.300" fill="#1b86d0" /><path d="M7 6.500V3.200a3.300 3.300 0 0 1 3.300 3.300z" fill="#f7b13c" /><path d="M12 4.500h6M12 7.500h6M12 10.500h6M4 11.500h5" stroke="#1b86d0" strokeWidth="1.500" /></svg></Tile>
        <Tile cls="border-b-2 border-[#76b9ed]"><svg width="26" height="24" viewBox="0 0 26 24" fill="none"><path d="M2 2.500C12-.5 22 4 24 12c0 4 0 6-1 8" stroke="#fff" strokeWidth="1.800" /><path d="M2 17l7-7 5 5 3-3 6 8c-3 3-6 3-10 3-5 0-9-2-11-6z" fill="#fff" /><circle cx="15.500" cy="8.500" r="1.600" fill="#fff" /><path d="M4 7c-2 2-3 6-2 9" stroke="#fff" strokeWidth="1.800" /></svg></Tile>
      </div>
      <div className="ml-[88px] flex items-center">
        <svg width="24" height="24" viewBox="0 0 24 24"><defs><linearGradient id="sun" x1="0" y1="0" x2="1" y2="1"><stop offset="0" stopColor="#fcb62c" /><stop offset="1" stopColor="#f26a12" /></linearGradient></defs><circle cx="10.500" cy="11.500" r="10" fill="url(#sun)" /><path d="M12 17c-5 0-5-5-1-5 1-4 6-4 7-1 6-1 6 6 1 6z" fill="#c3d8fa" /></svg>
        <span className="ml-[7px] w-[55px] text-[13.400px] tracking-[-0.3px]">34°C</span>
        <svg width="112" height="20" viewBox="1098 738 112 20" fill="none" stroke="#fff" strokeWidth="1.100">
          <path d="M1099.500 751l5.500-5.500 5.500 5.500" strokeWidth="1.300" />
          <rect x="1124.500" y="744.500" width="7" height="8" rx="1.500" /><path d="M1132 748l2.500-2v5l-2.500-2M1125 741.500c2-1 5-1 7 0M1125 755.500c2 1 5 1 7 0" />
          <circle cx="1152.500" cy="747.500" r="7" /><path d="M1145.500 747.500h14M1147 743.500h11M1147 751.500h5M1152.500 740.500c-5 4-5 10 0 14M1152.500 740.500c3 2 4 5 4 7" /><circle cx="1158" cy="752" r="3.500" fill="#1c2c41" /><path d="M1155.800 750l4.500 4.500" />
          <path d="M1174.500 744.500h9v7h-11v-3" /><path d="M1176 746h6v4h-6z" fill="#fff" /><path d="M1184.500 746v4M1169.500 742v3M1172.500 742v3M1168.500 745.500h5c0 3-5 3-5 0M1171 748v2" />
          <path d="M1193.500 745.500h2l4-3.500v12l-4-3.500h-2zM1202 745.500c1 1.500 1 3.500 0 5M1204.500 743.500c2 2.500 2 6.500 0 9M1207 741.500c3 3.500 3 9.500 0 13" />
        </svg>
        <div className="-mt-px ml-[8px] w-[28px] text-[11.500px] leading-[17px] tracking-[-0.3px]"><div>ENG</div><div>INTL</div></div>
        <div className="-mt-px ml-[4px] w-[58px] whitespace-nowrap text-center text-[11.500px] leading-[18px] tracking-[-0.3px]"><div>7:56 AM</div><div>11/5/2024</div></div>
        <svg width="26" height="28" viewBox="0 0 26 28" fill="none" className="ml-[14px] mt-[3px]"><path d="M1 4h16v12h-9l-2 3v-3H1z" fill="#fff" /><path d="M4 7.500h10M4 10h10M4 12.500h7" stroke="#1b2842" /><circle cx="17" cy="19.500" r="7.800" fill="#3a3f4a" stroke="#8b9099" /><text x="14" y="23.500" fontSize="11" fontWeight="600" fill="#fff">2</text></svg>
      </div>
      <div className="grow" />
      <div className="mr-[4px] w-px bg-[#5d6577]" />
    </div>
  );
}

export default function App() {
  return (
    <div className="flex h-[768px] w-[1366px] flex-col overflow-hidden bg-[#f3f2f1] font-['Open_Sans','Noto_Sans',sans-serif]">
      <TitleBar />
      <Tabs />
      <Ribbon />
      <div className="flex h-[543px] shadow-[inset_0_3px_3px_-2px_#00000026]">
        <Rail />
        <div className="flex w-[963px] shrink-0 flex-col">
          <div className="flex"><Canvas /><Filters /></div>
          <PageTabs />
        </div>
        <Visualizations />
        <DataPane />
      </div>
      <StatusBar />
      <Taskbar />
    </div>
  );
}
